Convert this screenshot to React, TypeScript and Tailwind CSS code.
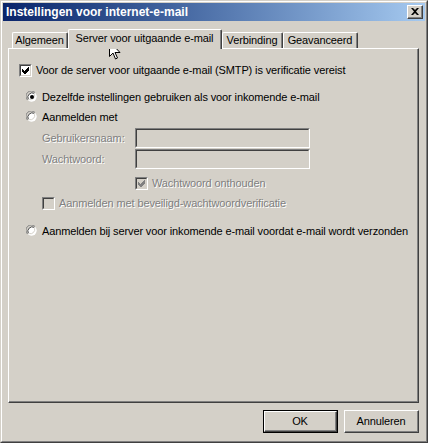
import React from 'react';

const font = { fontFamily: 'Tahoma, "Liberation Sans", Arial, sans-serif' };

function Check({ checked, disabled }: { checked?: boolean; disabled?: boolean }) {
    return (
        <span className="inline-flex w-[13px] h-[13px] shrink-0 border-t border-l border-t-[#808080] border-l-[#808080] border-b border-r border-b-white border-r-white">
            <span className={`flex-1 border-t border-l border-t-[#404040] border-l-[#404040] border-b border-r border-b-[#d4d0c8] border-r-[#d4d0c8] ${disabled ? 'bg-[#d4d0c8]' : 'bg-white'} flex items-center justify-center`}>
                {checked && (
                    <svg width="7" height="7" viewBox="0 0 7 7" shapeRendering="crispEdges">
                        <path d="M0 2 L2 4 L6 0 L7 0 L7 3 L3 7 L2 7 L0 5 Z" fill={disabled ? '#808080' : '#000'} />
                    </svg>
                )}
            </span>
        </span>
    );
}

function Radio({ checked }: { checked?: boolean }) {
    return (
        <svg width="12" height="12" viewBox="0 0 12 12" className="shrink-0">
            <path d="M1.5 9 A5.2 5.2 0 0 1 9 1.5" stroke="#808080" strokeWidth="1" fill="none" />
            <path d="M9.5 2.5 A5.2 5.2 0 0 1 2.5 9.5" stroke="#ffffff" strokeWidth="1" fill="none" />
            <circle cx="6" cy="6" r="4.5" fill="#fff" />
            <path d="M2.3 8.2 A4.4 4.4 0 0 1 8.2 2.3" stroke="#404040" strokeWidth="1" fill="none" />
            <path d="M8.6 3.2 A4.4 4.4 0 0 1 3.2 8.6" stroke="#d4d0c8" strokeWidth="1" fill="none" />
            {checked && <circle cx="6" cy="6" r="2" fill="#000" />}
        </svg>
    );
}

function Field() {
    return (
        <div className="w-[175px] h-[20px] border-t border-l border-t-[#808080] border-l-[#808080] border-b border-r border-b-white border-r-white">
            <div className="h-full border-t border-l border-t-[#404040] border-l-[#404040] border-b border-r border-b-[#d4d0c8] border-r-[#d4d0c8] bg-[#d4d0c8]" />
        </div>
    );
}

function Button({ label, primary }: { label: string; primary?: boolean }) {
    return (
        <div className={`w-[75px] h-[23px] ${primary ? 'border border-black' : ''}`}>
            <div className="h-full border-t border-l border-t-white border-l-white border-b border-r border-b-[#404040] border-r-[#404040]">
                <div className="h-full flex items-center justify-center border-b border-r border-b-[#808080] border-r-[#808080] text-black">
                    {label}
                </div>
            </div>
        </div>
    );
}

function Tab({ label, active, w }: { label: string; active?: boolean; w: string }) {
    return (
        <div
            className={`${w} ${active ? 'h-[20px] -mb-px relative z-10' : 'h-[16px]'} bg-[#d4d0c8] border-t border-l border-t-white border-l-white border-r border-r-[#404040] rounded-t-[2px] flex`}
        >
            <span className={`flex-1 h-full flex items-center justify-center whitespace-nowrap border-r border-r-[#808080] ${active ? 'pb-[3px]' : ''}`}>{label}</span>
        </div>
    );
}

export default function App() {
    return (
        <div style={font} className="relative w-[428px] h-[443px] text-[11px] tracking-[-0.12px] text-black bg-[#d4d0c8] border-t border-l border-t-[#d4d0c8] border-l-[#d4d0c8] border-b border-r border-b-[#404040] border-r-[#404040] select-none">
            <div className="h-full flex flex-col border-t border-l border-t-white border-l-white border-b border-r border-b-[#808080] border-r-[#808080] p-px">
                {/* Title bar */}
                <div className="h-[18px] shrink-0 flex items-center justify-between pl-[3px] pr-[2px] bg-gradient-to-r from-[#0a246a] to-[#a6caf0]">
                    <span className="text-white font-bold text-[12px] tracking-normal">Instellingen voor internet-e-mail</span>
                    <div className="w-[16px] h-[14px] bg-[#d4d0c8] border-t border-l border-t-white border-l-white border-b border-r border-b-[#404040] border-r-[#404040]">
                        <div className="h-full flex items-center justify-center border-b border-r border-b-[#808080] border-r-[#808080]">
                            <svg width="8" height="7" viewBox="0 0 8 7">
                                <path d="M0 0 H2 L4 2 L6 0 H8 L5 3.5 L8 7 H6 L4 5 L2 7 H0 L3 3.5 Z" fill="#000" />
                            </svg>
                        </div>
                    </div>
                </div>

                <div className="flex-1 flex flex-col pl-[5px] pr-[6px] pt-[8px]">
                    {/* Tabs */}
                    <div className="flex items-end pl-[4px] h-[19px]">
                        <Tab label="Algemeen" w="w-[56px]" />
                        <Tab label="Server voor uitgaande e-mail" w="w-[154px]" active />
                        <Tab label="Verbinding" w="w-[61px]" />
                        <Tab label="Geavanceerd" w="w-[75px]" />
                    </div>

                    {/* Tab page */}
                    <div className="h-[355px] border-t border-l border-t-white border-l-white border-b border-r border-b-[#404040] border-r-[#404040]">
                        <div className="h-full border-b border-r border-b-[#808080] border-r-[#808080] pl-[10px] pt-[15px] flex flex-col">
                            <div className="flex items-center gap-[4px] h-[13px]">
                                <Check checked />
                                <span>Voor de server voor uitgaande e-mail (SMTP) is verificatie vereist</span>
                            </div>

                            <div className="pl-[7px] flex flex-col">
                                <div className="flex items-center gap-[4px] h-[14px] mt-[13px]">
                                    <Radio checked />
                                    <span>Dezelfde instellingen gebruiken als voor inkomende e-mail</span>
                                </div>
                                <div className="flex items-center gap-[4px] h-[14px] mt-[6px]">
                                    <Radio />
                                    <span>Aanmelden met</span>
                                </div>

                                <div className="flex flex-col pl-[16px] mt-[4px] text-[#808080] [text-shadow:1px_1px_0_#fff]">
                                    <div className="flex items-center h-[20px]">
                                        <span className="w-[93px]">Gebruikersnaam:</span>
                                        <Field />
                                    </div>
                                    <div className="flex items-center h-[20px] mt-px">
                                        <span className="w-[93px]">Wachtwoord:</span>
                                        <Field />
                                    </div>
                                    <div className="flex items-center gap-[4px] h-[13px] mt-[8px] pl-[93px]">
                                        <Check checked disabled />
                                        <span>Wachtwoord onthouden</span>
                                    </div>
                                    <div className="flex items-center gap-[4px] h-[13px] mt-[7px]">
                                        <Check disabled />
                                        <span>Aanmelden met beveiligd-wachtwoordverificatie</span>
                                    </div>
                                </div>

                                <div className="flex items-center gap-[4px] h-[14px] mt-[14px]">
                                    <Radio />
                                    <span>Aanmelden bij server voor inkomende e-mail voordat e-mail wordt verzonden</span>
                                </div>
                            </div>
                        </div>
                    </div>

                    {/* Buttons */}
                    <div className="flex justify-end gap-[6px] mt-[7px]">
                        <Button label="OK" primary />
                        <Button label="Annuleren" />
                    </div>
                </div>
            </div>

            {/* Mouse pointer */}
            <svg className="absolute left-[108px] top-[40px]" width="12" height="19" viewBox="0 0 12 19">
                <path d="M0.5 0.5 V15.5 L4 12 L6.5 18 L8.5 17 L6 11.5 H11 Z" fill="#fff" stroke="#000" strokeWidth="1" strokeLinejoin="miter" />
            </svg>
        </div>
    );
}
